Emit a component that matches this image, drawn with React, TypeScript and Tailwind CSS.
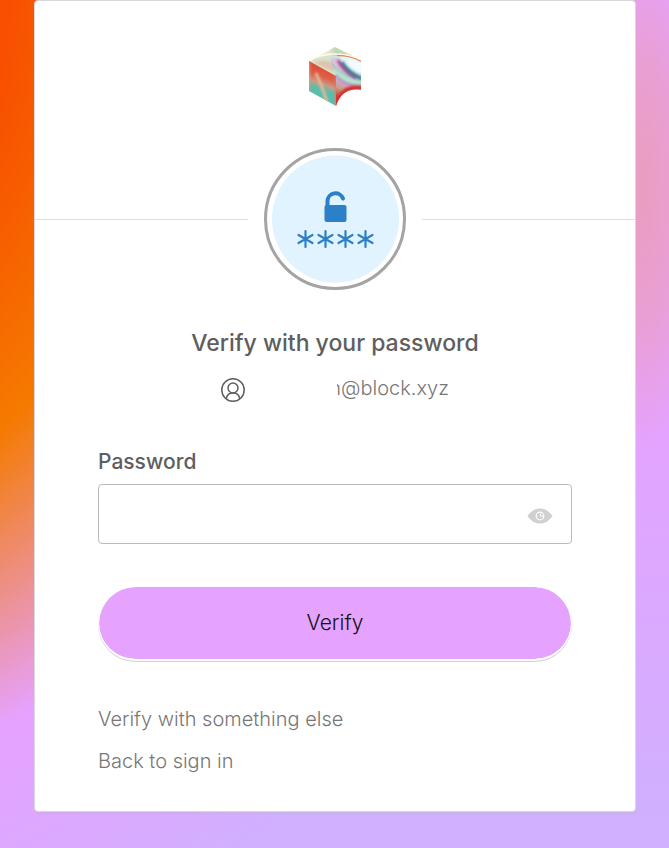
import { useState } from "react";

function Logo() {
  return (
    <svg viewBox="0 0 52 60" className="h-[60px] w-[52px]" role="img" aria-label="Block">
      <defs>
        <linearGradient id="logoTop" x1="0" y1="0.6" x2="1" y2="0.6">
          <stop offset="0" stopColor="#f8e6cf" />
          <stop offset="0.35" stopColor="#f1ead0" />
          <stop offset="0.52" stopColor="#b9d8b4" />
          <stop offset="0.75" stopColor="#dcd9ae" />
          <stop offset="1" stopColor="#f3efdc" />
        </linearGradient>
        <linearGradient id="logoLeft" x1="0.55" y1="0.05" x2="0.35" y2="1">
          <stop offset="0" stopColor="#d9452c" />
          <stop offset="0.32" stopColor="#e0604a" />
          <stop offset="0.48" stopColor="#c59d88" />
          <stop offset="0.6" stopColor="#5dbda8" />
          <stop offset="0.85" stopColor="#55c0ac" />
          <stop offset="1" stopColor="#d9a58c" />
        </linearGradient>
        <linearGradient id="logoRight" gradientUnits="userSpaceOnUse" x1="46" y1="10" x2="27" y2="50">
          <stop offset="0" stopColor="#f8ffff" />
          <stop offset="0.25" stopColor="#d5eff5" />
          <stop offset="0.4" stopColor="#8fb3c4" />
          <stop offset="0.52" stopColor="#a9dcc6" />
          <stop offset="0.65" stopColor="#c9a8d2" />
          <stop offset="0.8" stopColor="#c9a08c" />
          <stop offset="1" stopColor="#d9443c" />
        </linearGradient>
        <filter id="logoSoft" x="-20%" y="-20%" width="140%" height="140%">
          <feGaussianBlur stdDeviation="1.1" />
        </filter>
        <clipPath id="logoLeftClip">
          <path d="M0 15 27 30v30L0 45Z" />
        </clipPath>
        <clipPath id="logoRightClip">
          <path d="M21 12C32 9 44 11 52 15v29c-12-2-21 3-25 16V30Z" />
        </clipPath>
      </defs>
      <path d="M0 15 26 1l26 13v3L27 30Z" fill="url(#logoTop)" />
      <path d="M1 15.500C12 9 24 9 31 11L27 30Z" fill="#d5e2cc" />
      <path d="M5 17c8-3 15-3 19 0l2 9Z" fill="#e2c1ae" filter="url(#logoSoft)" />
      <path d="M0 15 27 30v30L0 45Z" fill="url(#logoLeft)" />
      <g clipPath="url(#logoLeftClip)" filter="url(#logoSoft)">
        <path d="M7 27c3 8 7 15 11 29" stroke="#e5b795" strokeWidth="3" fill="none" />
        <path d="M0 16v28" stroke="#df9b7e" strokeWidth="2" />
        <path d="M27 30v30" stroke="#df7b66" strokeWidth="2" />
      </g>
      <path d="M21 12C32 9 44 11 52 15v29c-12-2-21 3-25 16V30Z" fill="url(#logoRight)" />
      <g clipPath="url(#logoRightClip)" filter="url(#logoSoft)">
        <path d="M21 12c3-1 7-1 10 0 2 8 4 13 8 17-6-2-10-5-14-9Z" fill="#d9c5d8" />
        <path d="M29 14c3 8 9 13 18 18" stroke="#b0489f" strokeWidth="3.500" fill="none" />
        <path d="M33 16c4 8 11 13 20 17" stroke="#3c7c91" strokeWidth="3" fill="none" />
        <path d="M38 14c5 0 11 2 15 4v10c-7-2-13-7-15-14Z" fill="#f1fcff" />
        <path d="M24 23c7 8 16 14 29 14" stroke="#b5e6cd" strokeWidth="3" fill="none" />
        <path d="M27 29c7 9 15 11 26 10" stroke="#b48dba" strokeWidth="2" fill="none" />
        <path d="M27 60C31 46 39 40 53 42" stroke="#d92f2c" strokeWidth="5" fill="none" />
      </g>
      <path d="M1 14.500C14 6 36 6 51 14" stroke="#fffaf0" strokeWidth="1.600" fill="none" />
      <path d="M28 9.500c9 0 17 2 24 6" stroke="#ed7c50" strokeWidth="1.200" fill="none" />
    </svg>
  );
}

function PasswordBadge() {
  return (
    <div className="flex size-[142px] shrink-0 items-center justify-center rounded-full border-3 border-[#a5a4a4] bg-white">
      <svg viewBox="0 0 128 128" className="size-32" aria-hidden="true">
        <circle cx="64.500" cy="64" r="63.500" fill="#e1f3ff" />
        <path
          d="M56.500 52v-6a8 8 0 0 1 15.500-2.500"
          fill="none"
          stroke="#2b80c8"
          strokeWidth="4"
          strokeLinecap="round"
        />
        <rect x="53.500" y="50" width="22" height="17" rx="2" fill="#2b80c8" />
        <g stroke="#2b80c8" strokeWidth="2.200" strokeLinecap="round">
          {[34.5, 54.5, 74.5, 94.5].map((x) => (
            <path key={x} d={`M${x} 76v16M${x - 7} 80l14 8M${x - 7} 88l14-8`} />
          ))}
        </g>
      </svg>
    </div>
  );
}

function UserIcon() {
  return (
    <svg viewBox="0 0 24 24" className="size-6 shrink-0" fill="none" stroke="#5e5e5e" strokeWidth="1.5" aria-hidden="true">
      <circle cx="12" cy="12" r="11.2" />
      <circle cx="12" cy="10" r="5" />
      <path d="M5.2 20.8c.6-3.600 3.200-5.800 6.800-5.800s6.200 2.200 6.800 5.800" />
    </svg>
  );
}

function EyeIcon() {
  return (
    <svg viewBox="0 0 26 16" className="h-4 w-[26px]" aria-hidden="true">
      <path d="M0.500 8C4 3 8 .5 13 .5S22 3 25.500 8C22 13 18 15.500 13 15.500S4 13 .5 8Z" fill="#d0d0d0" />
      <circle cx="13" cy="8" r="3.800" fill="none" stroke="#fff" strokeWidth="1.200" />
      <path d="M13.500 5.500v2.500h2.500" fill="none" stroke="#fff" strokeWidth="1" />
    </svg>
  );
}

export default function App() {
  const [password, setPassword] = useState("");
  const [visible, setVisible] = useState(false);

  return (
    <div className="min-h-screen bg-[radial-gradient(ellipse_65px_260px_at_96%_190px,#ea9dbe_0%,#e99fd4_50%,transparent_100%),radial-gradient(ellipse_571px_776px_at_-200px_0px,#f84f00_36%,#f57a00_65.500%,#e6a2ff_100%,transparent_135%),linear-gradient(to_bottom,#e6a2ff_45%,#d0b0ff_98%)] pr-[33px] pb-9 pl-[34px] font-[Inter,sans-serif] font-light">
      <main className="mx-auto w-full max-w-[602px] rounded-[4px] border border-[#d7d7dc] bg-white pb-[34px] shadow-[0_3px_0_rgba(175,172,175,0.15)]">
        <header className="pt-[45px]">
          <div className="flex justify-center">
            <Logo />
          </div>
          <div className="mt-[42px] flex items-center gap-4">
            <span className="h-px flex-1 bg-[#dddddd]" />
            <PasswordBadge />
            <span className="h-px flex-1 bg-[#dddddd]" />
          </div>
        </header>

        <form className="px-[63px]" onSubmit={(event) => event.preventDefault()}>
          <h1 className="mt-[37px] text-center text-[23px] leading-8 font-medium text-[#5e5e5e]">
            Verify with your password
          </h1>
          <div className="mt-[15px] flex items-center justify-center leading-8">
            <UserIcon />
            <span className="flex w-[204px] justify-end text-xl text-[#777777]">
              <span className="z-10 -mr-2 h-8 w-20 bg-white" />
              <span>n@block.xyz</span>
            </span>
          </div>

          <label htmlFor="password" className="mt-10 block text-[21px] leading-8 font-medium text-[#5e5e5e]">
            Password
          </label>
          <div className="mt-[6px] flex h-[60px] items-center rounded-[4px] border border-[#bbbbbb] bg-white pr-[18px] pt-1 focus-within:border-[#777777]">
            <input
              id="password"
              type={visible ? "text" : "password"}
              value={password}
              onChange={(event) => setPassword(event.target.value)}
              autoComplete="current-password"
              className="h-full min-w-0 flex-1 bg-transparent px-4 text-xl outline-none"
            />
            <button type="button" aria-label="Show password" aria-pressed={visible} onClick={() => setVisible(!visible)}>
              <EyeIcon />
            </button>
          </div>

          <button
            type="submit"
            className="mt-[42px] h-[75px] w-full rounded-full border border-b-2 border-white bg-[#e6a2ff] bg-clip-padding text-[21px] text-[#111111] shadow-[0_1px_0_#d0d0d0]"
          >
            Verify
          </button>

          <nav className="mt-[42px] flex flex-col items-start gap-[10px] text-xl leading-8 text-[#777777]">
            <a href="#factors">Verify with something else</a>
            <a href="#signin">Back to sign in</a>
          </nav>
        </form>
      </main>
    </div>
  );
}
